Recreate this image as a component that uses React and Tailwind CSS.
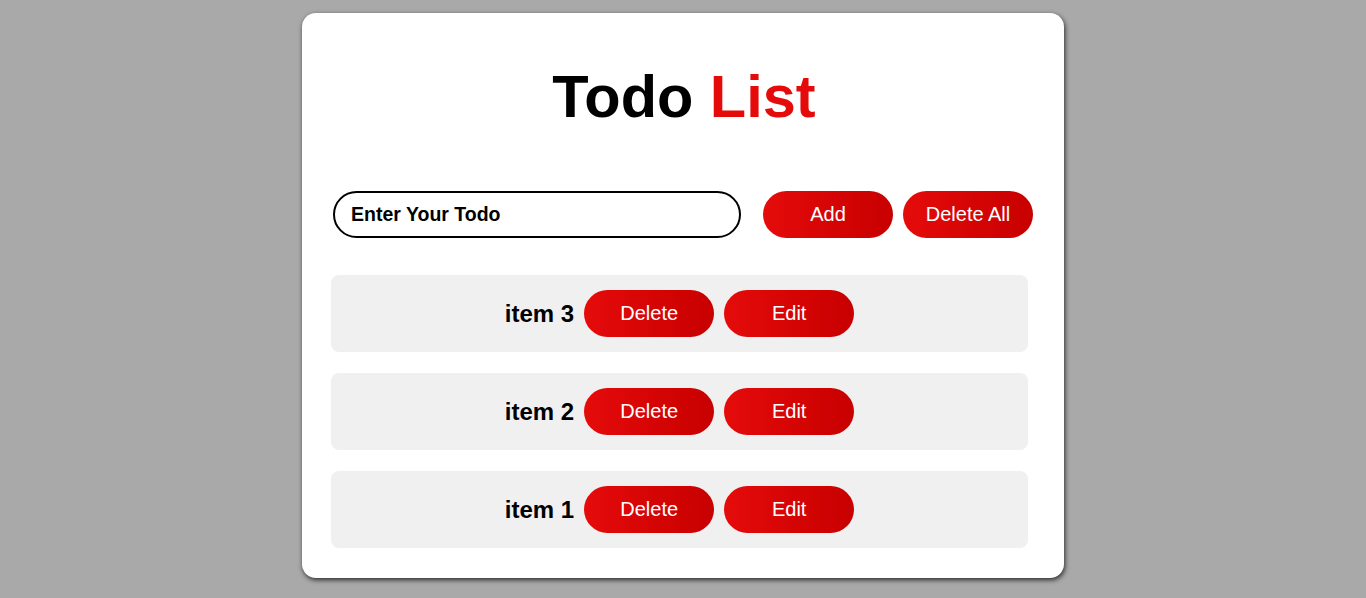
import React, { useState } from 'react';

const btn =
  'h-[47px] w-[130px] rounded-full bg-gradient-to-r from-[#e50b0b] to-[#c80000] text-white text-[20px] leading-none pb-[2px] flex items-center justify-center';

export default function App() {
  const [todos] = useState(['item 3', 'item 2', 'item 1']);

  return (
    <div
      className="min-h-[598px] w-full bg-[#a9a9a9] pt-[13px]"
      style={{ fontFamily: '"Liberation Sans", Arial, sans-serif' }}
    >
      <div className="mx-auto w-[762px] h-[565px] bg-white rounded-[14px] shadow-[1px_2px_5px_rgba(0,0,0,0.75)] px-[29px] pt-[54px]">
        {/* TITLE */}
        <h1 className="text-center text-[59.5px] font-bold leading-[60px] text-black pl-[2px]">
          Todo <span className="text-[#e60b0b]">List</span>
        </h1>

        {/* INPUT ROW */}
        <div className="flex items-center mt-[64px] pl-[2px]">
          <div className="w-[408px] h-[47px] border-2 border-black rounded-full flex items-center pl-[16px] text-[19.5px] font-bold text-black">
            Enter Your Todo
          </div>
          <button className={btn + ' ml-[22px]'}>Add</button>
          <button className={btn + ' ml-[10px]'}>Delete All</button>
        </div>

        {/* LIST */}
        <div className="mt-[37px] flex flex-col gap-[21px] w-[697px]">
          {todos.map((t) => (
            <div
              key={t}
              className="h-[77px] bg-[#f0f0f0] rounded-[8px] flex items-center justify-center gap-[10px]"
            >
              <span className="text-[24px] font-bold text-black">{t}</span>
              <button className={btn}>Delete</button>
              <button className={btn}>Edit</button>
            </div>
          ))}
        </div>
      </div>
    </div>
  );
}
